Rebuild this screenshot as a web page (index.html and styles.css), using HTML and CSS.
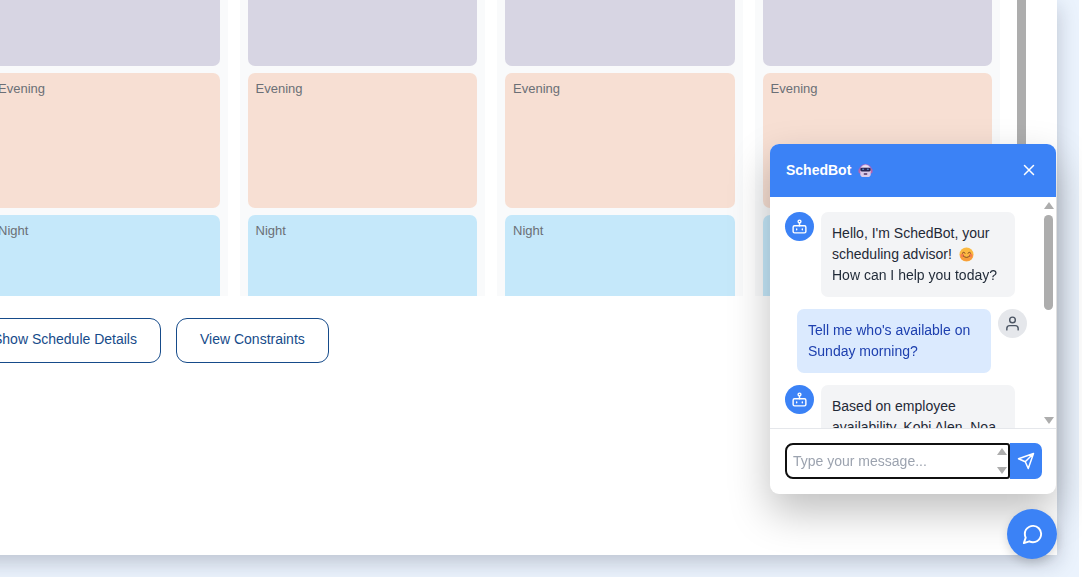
FILE: index.html
```html
<!DOCTYPE html>
<html lang="en">
<head>
<meta charset="utf-8">
<title>Schedule</title>
<link rel="stylesheet" href="styles.css">
</head>
<body>
<svg class="sprite" aria-hidden="true">
  <symbol id="bot" viewBox="0 0 24 24"><rect x="3" y="11" width="18" height="10" rx="2"/><circle cx="12" cy="5" r="2"/><path d="M12 7v4M8 15.5v1M16 15.5v1"/></symbol>
</svg>
<div class="page">
  <main class="frame">
    <div class="scroller">
      <div class="board">
        <section class="day"><div class="shift morning"></div><div class="shift evening">Evening</div><div class="shift night">Night</div></section>
        <section class="day"><div class="shift morning"></div><div class="shift evening">Evening</div><div class="shift night">Night</div></section>
        <section class="day"><div class="shift morning"></div><div class="shift evening">Evening</div><div class="shift night">Night</div></section>
        <section class="day"><div class="shift morning"></div><div class="shift evening">Evening</div><div class="shift night">Night</div></section>
      </div>
      <div class="board-bar"></div>
    </div>
    <div class="actions">
      <button class="outline" type="button">Show Schedule Details</button>
      <button class="outline" type="button">View Constraints</button>
    </div>
  </main>
</div>

<aside class="chat" aria-label="SchedBot">
  <header class="chat-head">
    <h2 class="chat-title">SchedBot
      <svg class="emoji" viewBox="0 0 16 16" aria-hidden="true">
        <circle cx="8" cy="8" r="7" fill="#9464cc"/>
        <rect x="0.500" y="6" width="3" height="5" rx="1.500" fill="#b765ae"/>
        <rect x="12.500" y="6" width="3" height="5" rx="1.500" fill="#b765ae"/>
        <path d="M2.500 7a5.500 5.500 0 0 1 11 0v5q0 3-3 3h-5q-3 0-3-3z" fill="#dccbe8"/>
        <path d="M4 4.500Q8 1 12 4.500z" fill="#eee4f3"/>
        <rect x="2.500" y="5" width="11" height="4" rx="1.500" fill="#29254f"/>
        <rect x="4.500" y="6" width="2" height="1.500" fill="#5a7fc4"/>
        <rect x="9.500" y="6" width="2" height="1.500" fill="#5a7fc4"/>
        <rect x="6" y="11" width="4" height="1.500" rx=".7" fill="#4b315f"/>
      </svg>
    </h2>
    <button class="close" type="button" aria-label="Close"><svg class="icon" viewBox="0 0 24 24"><path d="M18 6 6 18M6 6l12 12"/></svg></button>
  </header>
  <div class="log">
    <div class="messages">
      <div class="row">
        <span class="avatar"><svg class="icon"><use href="#bot"/></svg></span>
        <p class="bubble">Hello, I'm SchedBot, your scheduling advisor!
          <svg class="emoji" viewBox="0 0 16 16" aria-hidden="true"><circle cx="8" cy="8" r="7.500" fill="#fbb941"/><path d="M1 10a7.500 7.500 0 0 0 14 0q-7 3-14 0z" fill="#f79b3c"/><circle cx="3.500" cy="9" r="2" fill="#f5804c"/><circle cx="12.500" cy="9" r="2" fill="#f5804c"/><path d="M3.500 6.500q1.500-2 3 0M9.500 6.500q1.500-2 3 0M4.500 9.500q3.500 3.500 7 0" fill="none" stroke="#7a4020" stroke-linecap="round"/></svg>
          <br>How can I help you today?</p>
      </div>
      <div class="row mine">
        <p class="bubble">Tell me who's available on Sunday morning?</p>
        <span class="avatar"><svg class="icon" viewBox="0 0 24 24"><path d="M20 21v-2a4 4 0 0 0-4-4H8a4 4 0 0 0-4 4v2"/><circle cx="12" cy="7" r="4"/></svg></span>
      </div>
      <div class="row">
        <span class="avatar"><svg class="icon"><use href="#bot"/></svg></span>
        <p class="bubble">Based on employee availability, Kobi Alen, Noa</p>
      </div>
    </div>
    <div class="bar" aria-hidden="true"><i class="up"></i><i class="thumb"></i><i class="down"></i></div>
  </div>
  <form class="compose">
    <div class="field">
      <textarea class="entry" rows="1" placeholder="Type your message..." aria-label="Type your message"></textarea>
      <div class="stepper" aria-hidden="true"><i class="up"></i><i class="down"></i></div>
    </div>
    <button class="send" type="button" aria-label="Send"><svg class="icon" viewBox="0 0 24 24"><path d="m22 2-7 20-4-9-9-4ZM22 2 11 13"/></svg></button>
  </form>
</aside>
<button class="launcher" type="button" aria-label="Toggle chat"><svg class="icon" viewBox="0 0 24 24"><path d="M21 11.500a8.380 8.380 0 0 1-.9 3.800 8.500 8.500 0 0 1-7.600 4.700 8.380 8.380 0 0 1-3.800-.9L3 21l1.900-5.700a8.380 8.380 0 0 1-.9-3.800 8.500 8.500 0 0 1 4.700-7.600 8.380 8.380 0 0 1 3.800-.9h.5a8.480 8.480 0 0 1 8 8v.5z"/></svg></button>
</body>
</html>
```
FILE: styles.css
```css
* { box-sizing: border-box; }
body {
  margin: 0;
  overflow: hidden;
  background: #fff;
  font-family: "Liberation Sans", Arial, sans-serif;
  font-size: 14px;
}
button, textarea { font: inherit; }
button { cursor: pointer; }
.sprite { display: none; }
.icon {
  width: 17px;
  height: 17px;
  fill: none;
  stroke: currentColor;
  stroke-width: 2;
  stroke-linecap: round;
  stroke-linejoin: round;
}

.page {
  min-height: 100vh;
  margin-right: 3px;
  padding: 0 22px 22px 0;
  overflow: hidden;
  background: #ebf3fd;
}
.frame {
  min-height: calc(100vh - 22px);
  margin-left: -31px;
  background: #fff;
  box-shadow: 0 7px 20px rgba(20, 25, 45, .22);
}
.scroller {
  display: flex;
  height: 296px;
  padding: 0 31px 0 13px;
  overflow: hidden;
}
.board {
  flex: 1;
  display: grid;
  grid-template-columns: repeat(4, 1fr);
  gap: 12px;
  margin: -69px 17px 0 0;
}
.board-bar { width: 9px; background: #adadad; }
.day {
  display: flex;
  flex-direction: column;
  gap: 7px;
  padding: 0 8px;
  background: #f9fafb;
}
.shift {
  flex: none;
  height: 135px;
  padding: 8px;
  border-radius: 7px;
  color: #6b6f76;
  font-size: 13px;
  line-height: 16px;
}
.morning { background: #d7d5e3; }
.evening { background: #f7dfd3; }
.night { background: #c5e8fa; }
.actions { display: flex; gap: 15px; padding-top: 22px; }
.outline {
  height: 45px;
  padding: 0 23px 3px;
  border: 1px solid #164b8a;
  border-radius: 11px;
  background: #fff;
  color: #164b8a;
}

.chat {
  position: fixed;
  right: 26px;
  bottom: 83px;
  display: flex;
  flex-direction: column;
  width: 286px;
  height: 350px;
  border-radius: 9px;
  overflow: hidden;
  background: #fff;
  box-shadow: 0 18px 40px rgba(0, 0, 0, .25);
}
.chat-head {
  display: flex;
  align-items: center;
  justify-content: space-between;
  height: 53px;
  padding: 0 18px 2px 16px;
  background: #3b82f6;
  color: #fff;
}
.chat-title { margin: 0; font-size: 14px; }
.emoji { width: 15px; height: 15px; margin-left: 3px; vertical-align: -3px; }
.close, .send, .launcher {
  display: flex;
  align-items: center;
  justify-content: center;
  padding: 0;
  border: 0;
  background: #3b82f6;
  color: #fff;
}
.close .icon { width: 18px; height: 18px; }
.log { flex: 1; display: flex; min-height: 0; overflow: hidden; }
.messages {
  flex: 1;
  display: flex;
  flex-direction: column;
  gap: 12px;
  padding: 15px 14px 15px 15px;
}
.row { display: flex; gap: 7px; }
.mine { justify-content: flex-end; }
.avatar {
  flex: none;
  display: flex;
  align-items: center;
  justify-content: center;
  width: 29px;
  height: 29px;
  border-radius: 50%;
  background: #3b82f6;
  color: #fff;
}
.mine .avatar { background: #e5e7eb; color: #4b5563; }
.bubble {
  width: 194px;
  margin: 0;
  padding: 11px;
  border-radius: 7px;
  background: #f3f4f6;
  color: #1f2937;
  line-height: 21px;
}
.mine .bubble { background: #dbeafe; color: #1e40af; }
.bar {
  display: flex;
  flex-direction: column;
  align-items: center;
  width: 15px;
  padding: 5px 0 4px;
}
.up, .down {
  border: 5px solid transparent;
  border-top-width: 0;
  border-bottom: 7px solid #adadad;
}
.down { border-top: 7px solid #adadad; border-bottom-width: 0; }
.thumb { width: 9px; height: 95px; margin: 6px 0 auto; border-radius: 5px; background: #adadad; }
.compose {
  display: flex;
  padding: 14px 14px 15px 15px;
  border-top: 1px solid #e5e7eb;
}
.field { position: relative; flex: 1; display: flex; }
.entry {
  flex: 1;
  min-width: 0;
  height: 36px;
  padding: 6px;
  border: 2px solid #101010;
  border-radius: 8px 3px 3px 8px;
  outline: 0;
  overflow: hidden;
  resize: none;
  line-height: 21px;
}
.entry::placeholder { color: #9ca3af; }
.stepper {
  position: absolute;
  inset: 5px 3px 5px auto;
  display: flex;
  flex-direction: column;
  justify-content: space-between;
}
.send { width: 32px; border-radius: 0 7px 7px 0; }
.send .icon { width: 18px; height: 18px; }
.launcher {
  position: fixed;
  right: 25px;
  bottom: 18px;
  width: 50px;
  height: 50px;
  border-radius: 50%;
  box-shadow: 0 4px 10px rgba(0, 0, 0, .15);
}
.launcher .icon { width: 23px; height: 23px; }
```
